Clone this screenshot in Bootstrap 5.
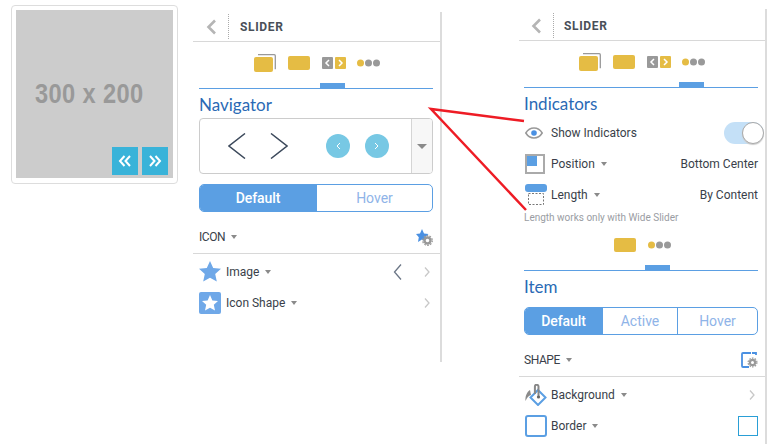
<!DOCTYPE html>
<html lang="en">
<head>
<meta charset="utf-8">
<title>Slider settings</title>
<link href="https://cdn.jsdelivr.net/npm/bootstrap@5.3.0/dist/css/bootstrap.min.css" rel="stylesheet">
<style>
html,body{height:444px;overflow:hidden;background:#fff}
body{font-family:Roboto,"Liberation Sans",sans-serif;font-size:12px;color:#3a3f4a;position:relative}
svg{display:block;flex:none}
.stage{height:444px}
.thumb{width:167px;height:179px;margin:5px 0 0 11px;padding:4px;border:1px solid #ddd;border-radius:4px;flex:none}
.thumb-img{height:168px;width:157px;background:#ccc;position:relative;font-family:"Liberation Sans",sans-serif;font-weight:700;font-size:27px;color:#999;padding-top:69px;padding-left:19px;line-height:31px;letter-spacing:.45px}
.thumb-img span.lbl{display:inline-block;transform:scaleX(.875);transform-origin:left}
.thumb-nav{position:absolute;right:5px;bottom:3px;gap:4px}
.thumb-nav div{width:26px;height:28px;background:#39b3d9}
.pane{border-right:2px solid #dcdcdc;flex:none}
.pane-a{width:249px;height:350px;margin:12px 0 0 15px}
.pane-b{width:248px;height:435px;margin:9px 0 0 77px;padding-top:2px}
.pane-head{height:30px;border-bottom:1px solid #d8d8d8}
.back{width:36px;padding-left:13px;height:25px;border-right:1px dotted #aaa;margin-right:11px}
.pane-b .back{width:35px;margin-right:10px;padding-left:12px}
.pane-title{font-weight:700;font-size:12px;letter-spacing:.65px;color:#4a4f58}
.pane-body-a{padding:0 7px 0 6px}
.pane-body-b{padding:0 7px 0 5px}
.pane-rule{border-bottom:1px solid #d8d8d8}
.icons-row{height:19px;margin-top:11px;gap:12px;padding-left:2px}
.sub-icons{margin-top:10px}
.tight{margin-left:-2px}
.tab-rule{height:6px;border-bottom:1px solid #5b9fe3;margin-top:11px}
.tab-rule i{display:block;height:5px;width:25px;background:#5b9fe3}
.at-121{margin-left:121px}
.at-155{margin-left:155px}
.sect{font-family:Lato,sans-serif;font-size:17px;line-height:29px;height:29px;padding-top:1px;color:#2a6ab5}
.nav-box{height:56px;border:1px solid #ccc;border-radius:4px;margin-bottom:10px;overflow:hidden}
.nav-side{width:21px;background:#f7f7f7;border-left:1px solid #d5d5d5}
.nav-main{padding-left:28px}
.gap-big{margin-left:38px}
.gap-mid{margin-left:15px}
.seg{height:28px;border:1px solid #5b9fe3;border-radius:5px;overflow:hidden;font-size:14px;color:#8fb4e8}
.seg>div{border-left:1px solid #5b9fe3}
.seg>div:first-child{border-left:0}
.seg>.on{background:#5b9fe3;color:#fff;font-weight:500;letter-spacing:-.1px}
.seg-w1{width:116px}.seg-w2{width:77px}.seg-w3{width:75px}
.sec-row{height:41px;padding-top:9px}
.sec-line{font-size:12px;letter-spacing:-.45px;color:#3a3f4a}
.opt{height:31px}
.opt-first{margin-top:2px}
.opt-ic{width:25px;margin-right:2px}
.pane-b .opt-ic{padding-left:1px}
.tri{display:inline-block;width:0;height:0;border-left:3.5px solid transparent;border-right:3.5px solid transparent;border-top:4px solid #8a8a8a;margin-left:6px;vertical-align:2px}
.tri-lg{border-left-width:5px;border-right-width:5px;border-top-width:5px}
.note{font-size:10px;line-height:14px;color:#9a9da3;height:14px;margin-top:1px}
.switch-track{width:40px;height:22px;background:#c4e0f7;border-radius:11px;position:relative;margin-right:-6px}
.switch-knob{position:absolute;right:0;top:0;width:22px;height:22px;border-radius:50%;background:#fff;border:1px solid #a9a9a9;box-shadow:0 1px 1px #ccc}
.swatch{width:20px;height:20px;border:1px solid #2a9fd6}
.item-top{margin-bottom:7px}
.stray{margin-right:22px}
.chev{margin-right:3px}
.red{position:absolute;left:0;top:0;pointer-events:none}
</style>
</head>
<body>
<div class="stage d-flex align-items-start">
  <div class="thumb">
    <div class="thumb-img"><span class="lbl">300 x 200</span>
      <div class="thumb-nav d-flex">
        <div class="d-flex align-items-center justify-content-center"><svg width="14" height="12" viewBox="0 0 14 12" fill="none" stroke="#fff" stroke-width="2"><path d="M6.500 1 2 6l4.500 5M12 1 7.500 6l4.500 5"/></svg></div>
        <div class="d-flex align-items-center justify-content-center"><svg width="14" height="12" viewBox="0 0 14 12" fill="none" stroke="#fff" stroke-width="2"><path d="M2 1l4.500 5L2 11M7.500 1 12 6l-4.500 5"/></svg></div>
      </div>
    </div>
  </div>

  <div class="pane pane-a">
    <div class="pane-head d-flex align-items-center">
      <div class="back d-flex align-items-center"><svg width="11" height="16" viewBox="0 0 11 16" fill="none" stroke="#b5b5b5" stroke-width="2.600"><path d="M9 1.500 2.500 8 9 14.500"/></svg></div>
      <div class="pane-title">SLIDER</div>
    </div>
    <div class="pane-body-a">
      <div class="icons-row d-flex justify-content-center align-items-center">
        <svg width="22" height="18" viewBox="0 0 22 18"><path d="M4 .7h16.300a1 1 0 0 1 1 1V15.300" fill="none" stroke="#999" stroke-width="1.300"/><rect x="0" y="3" width="19" height="15" rx="2" fill="#e5bc44"/></svg>
        <svg width="22" height="14" viewBox="0 0 22 14"><rect width="22" height="14" rx="2" fill="#e5bc44"/></svg>
        <svg width="25" height="12" viewBox="0 0 25 12" fill="none" stroke="#fff" stroke-width="1.500"><rect width="11" height="12" rx="1" fill="#999" stroke="none"/><rect x="13" width="11" height="12" rx="1" fill="#e5bc44" stroke="none"/><path d="M7 3 4 6l3 3M17 3l3 3-3 3"/></svg>
        <svg class="tight" width="23" height="8" viewBox="0 0 23 8"><circle cx="3.500" cy="4" r="3.500" fill="#e5bc44"/><circle cx="11.500" cy="4" r="3.500" fill="#999"/><circle cx="19.500" cy="4" r="3.500" fill="#999"/></svg>
      </div>
      <div class="tab-rule"><i class="at-121"></i></div>
      <div class="sect">Navigator</div>
      <div class="nav-box d-flex">
        <div class="nav-main flex-grow-1 d-flex align-items-center">
          <svg width="18" height="26" viewBox="0 0 18 26" fill="none" stroke="#3d4a5c" stroke-width="1.500"><path d="M17 .5 1 13l16 12.500"/></svg>
          <svg class="ms-4" width="18" height="26" viewBox="0 0 18 26" fill="none" stroke="#3d4a5c" stroke-width="1.500"><path d="M1 .5 17 13 1 25.500"/></svg>
          <svg class="gap-big" width="24" height="24" viewBox="0 0 24 24" fill="none" stroke="#fff"><circle cx="12" cy="12" r="12" fill="#77c8e4" stroke="none"/><path d="M14 9 11 12l3 3"/></svg>
          <svg class="gap-mid" width="24" height="24" viewBox="0 0 24 24" fill="none" stroke="#fff"><circle cx="12" cy="12" r="12" fill="#77c8e4" stroke="none"/><path d="M10 9l3 3-3 3"/></svg>
        </div>
        <div class="nav-side d-flex align-items-center justify-content-center"><span class="tri tri-lg m-0"></span></div>
      </div>
      <div class="seg d-flex text-center">
        <div class="on seg-w1 d-flex align-items-center justify-content-center">Default</div>
        <div class="flex-grow-1 d-flex align-items-center justify-content-center">Hover</div>
      </div>
      <div class="sec-row d-flex align-items-center justify-content-between">
        <div class="sec-line">ICON<span class="tri"></span></div>
        <svg width="17" height="17" viewBox="0 0 17 17"><path d="M6 0l2 4.500 4.500.5-3.300 3.200.8 4.800L6 10.500 2 13l.8-4.800L0 5l4-.5z" fill="#4a90e2"/><circle cx="11.500" cy="11.500" r="3" fill="#fff" stroke="#999" stroke-width="2.400"/><circle cx="11.500" cy="11.500" r="4.800" fill="none" stroke="#999" stroke-width="1.300" stroke-dasharray="1.700 1.300"/></svg>
      </div>
    </div>
    <div class="pane-rule"></div>
    <div class="pane-body-a">
      <div class="opt opt-first d-flex align-items-center">
        <div class="opt-ic"><svg width="22" height="21" viewBox="0 0 22 21"><path d="M11 0l3.200 7 7.800.8-5.800 5.200 1.600 7.500L11 16.700l-6.800 3.800 1.600-7.500L0 7.800 7.800 7z" fill="#6fa8e8"/></svg></div>
        <div class="flex-grow-1">Image<span class="tri"></span></div>
        <svg class="stray" width="9" height="16" viewBox="0 0 9 16" fill="none" stroke="#6b7686" stroke-width="1.300"><path d="M8 .5 1.500 8 8 15.500"/></svg>
        <svg class="chev" width="6" height="10" viewBox="0 0 6 10" fill="none" stroke="#c8c8c8" stroke-width="1.300"><path d="M1 .5 5 5 1 9.500"/></svg>
      </div>
      <div class="opt d-flex align-items-center">
        <div class="opt-ic"><svg width="22" height="22" viewBox="0 0 22 22"><rect width="22" height="22" rx="2" fill="#6fa8e8"/><path d="M11 3l2.400 5.400 5.600.6-4.200 3.800 1.200 5.700L11 15.700l-5 2.800 1.200-5.700L3 9l5.600-.6z" fill="#fff"/></svg></div>
        <div class="flex-grow-1">Icon Shape<span class="tri"></span></div>
        <svg class="chev" width="6" height="10" viewBox="0 0 6 10" fill="none" stroke="#c8c8c8" stroke-width="1.300"><path d="M1 .5 5 5 1 9.500"/></svg>
      </div>
    </div>
  </div>

  <div class="pane pane-b">
    <div class="pane-head d-flex align-items-center">
      <div class="back d-flex align-items-center"><svg width="11" height="16" viewBox="0 0 11 16" fill="none" stroke="#b5b5b5" stroke-width="2.600"><path d="M9 1.500 2.500 8 9 14.500"/></svg></div>
      <div class="pane-title">SLIDER</div>
    </div>
    <div class="pane-body-b">
      <div class="icons-row d-flex justify-content-center align-items-center">
        <svg width="22" height="18" viewBox="0 0 22 18"><path d="M4 .7h16.300a1 1 0 0 1 1 1V15.300" fill="none" stroke="#999" stroke-width="1.300"/><rect x="0" y="3" width="19" height="15" rx="2" fill="#e5bc44"/></svg>
        <svg width="22" height="14" viewBox="0 0 22 14"><rect width="22" height="14" rx="2" fill="#e5bc44"/></svg>
        <svg width="25" height="12" viewBox="0 0 25 12" fill="none" stroke="#fff" stroke-width="1.500"><rect width="11" height="12" rx="1" fill="#999" stroke="none"/><rect x="13" width="11" height="12" rx="1" fill="#e5bc44" stroke="none"/><path d="M7 3 4 6l3 3M17 3l3 3-3 3"/></svg>
        <svg class="tight" width="23" height="8" viewBox="0 0 23 8"><circle cx="3.500" cy="4" r="3.500" fill="#e5bc44"/><circle cx="11.500" cy="4" r="3.500" fill="#999"/><circle cx="19.500" cy="4" r="3.500" fill="#999"/></svg>
      </div>
      <div class="tab-rule"><i class="at-155"></i></div>
      <div class="sect">Indicators</div>
      <div class="opt d-flex align-items-center justify-content-between">
        <div class="d-flex align-items-center">
          <div class="opt-ic"><svg class="ms-eye" width="18" height="12" viewBox="0 0 18 12"><path d="M.8 6C3 2.400 6 1 9 1s6 1.400 8.200 5C15 9.600 12 11 9 11S3 9.600.8 6z" fill="none" stroke="#999" stroke-width="1.500"/><circle cx="9" cy="6" r="2.800" fill="#4a90e2"/></svg></div>
          <div>Show Indicators</div>
        </div>
        <div class="switch-track"><div class="switch-knob"></div></div>
      </div>
      <div class="opt d-flex align-items-center justify-content-between">
        <div class="d-flex align-items-center">
          <div class="opt-ic"><svg width="20" height="20" viewBox="0 0 20 20"><rect x="1" y="1" width="18" height="18" fill="#fff" stroke="#aaa" stroke-width="2"/><rect x="2" y="2" width="10" height="10" fill="#5b9fe3"/></svg></div>
          <div>Position<span class="tri"></span></div>
        </div>
        <div>Bottom Center</div>
      </div>
      <div class="opt d-flex align-items-center justify-content-between">
        <div class="d-flex align-items-center">
          <div class="opt-ic"><svg width="22" height="21" viewBox="0 0 22 21"><rect width="22" height="8" rx="3" fill="#5b9fe3"/><rect x="3.500" y="9.500" width="15" height="11" fill="none" stroke="#777" stroke-dasharray="2 1.500"/></svg></div>
          <div>Length<span class="tri"></span></div>
        </div>
        <div>By Content</div>
      </div>
      <div class="note">Length works only with Wide Slider</div>
      <div class="icons-row sub-icons d-flex justify-content-center align-items-center">
        <svg width="22" height="14" viewBox="0 0 22 14"><rect width="22" height="14" rx="2" fill="#e5bc44"/></svg>
        <svg width="23" height="8" viewBox="0 0 23 8"><circle cx="3.500" cy="4" r="3.500" fill="#e5bc44"/><circle cx="11.500" cy="4" r="3.500" fill="#999"/><circle cx="19.500" cy="4" r="3.500" fill="#999"/></svg>
      </div>
      <div class="tab-rule"><i class="at-121"></i></div>
      <div class="sect item-top">Item</div>
      <div class="seg d-flex text-center">
        <div class="on seg-w2 d-flex align-items-center justify-content-center">Default</div>
        <div class="seg-w3 d-flex align-items-center justify-content-center">Active</div>
        <div class="flex-grow-1 d-flex align-items-center justify-content-center">Hover</div>
      </div>
      <div class="sec-row d-flex align-items-center justify-content-between">
        <div class="sec-line">SHAPE<span class="tri"></span></div>
        <svg width="17" height="16" viewBox="0 0 17 16"><path d="M10 1H2a1 1 0 0 0-1 1v12a1 1 0 0 0 1 1h6" fill="none" stroke="#4a90e2" stroke-width="1.800"/><path d="M11 1h4v2" fill="none" stroke="#4a90e2" stroke-width="1.800"/><circle cx="11.500" cy="10.500" r="2.600" fill="#fff" stroke="#999" stroke-width="2.200"/><circle cx="11.500" cy="10.500" r="4.400" fill="none" stroke="#999" stroke-width="1.200" stroke-dasharray="1.600 1.200"/></svg>
      </div>
    </div>
    <div class="pane-rule"></div>
    <div class="pane-body-b">
      <div class="opt opt-first d-flex align-items-center">
        <div class="opt-ic"><svg width="23" height="22" viewBox="0 0 23 22"><path d="M5 6C2 8 0 12 .5 17 2 13.500 3.500 12 6 11z" fill="#8a8a8a"/><path d="M13 6 20.500 13.500 13 21 5.500 13.500z" fill="#fff" stroke="#5b9fe3" stroke-width="2"/><path d="M13.500 13V2.500a1.800 1.800 0 0 0-3.600 0V10" fill="none" stroke="#888" stroke-width="2"/><circle cx="13.500" cy="13" r="1.600" fill="#666"/></svg></div>
        <div class="flex-grow-1">Background<span class="tri"></span></div>
        <svg class="chev" width="6" height="10" viewBox="0 0 6 10" fill="none" stroke="#c8c8c8" stroke-width="1.300"><path d="M1 .5 5 5 1 9.500"/></svg>
      </div>
      <div class="opt d-flex align-items-center">
        <div class="opt-ic"><svg width="22" height="22" viewBox="0 0 22 22"><rect x="1" y="1" width="20" height="20" rx="2" fill="#fff" stroke="#5b9fe3" stroke-width="2"/></svg></div>
        <div class="flex-grow-1">Border<span class="tri"></span></div>
        <div class="swatch"></div>
      </div>
    </div>
  </div>
</div>
<svg class="red" width="775" height="444" viewBox="0 0 775 444" fill="none" stroke="#ee1c25" stroke-width="2.500"><path d="M524 121 431 109 526 210"/></svg>
</body>
</html>
